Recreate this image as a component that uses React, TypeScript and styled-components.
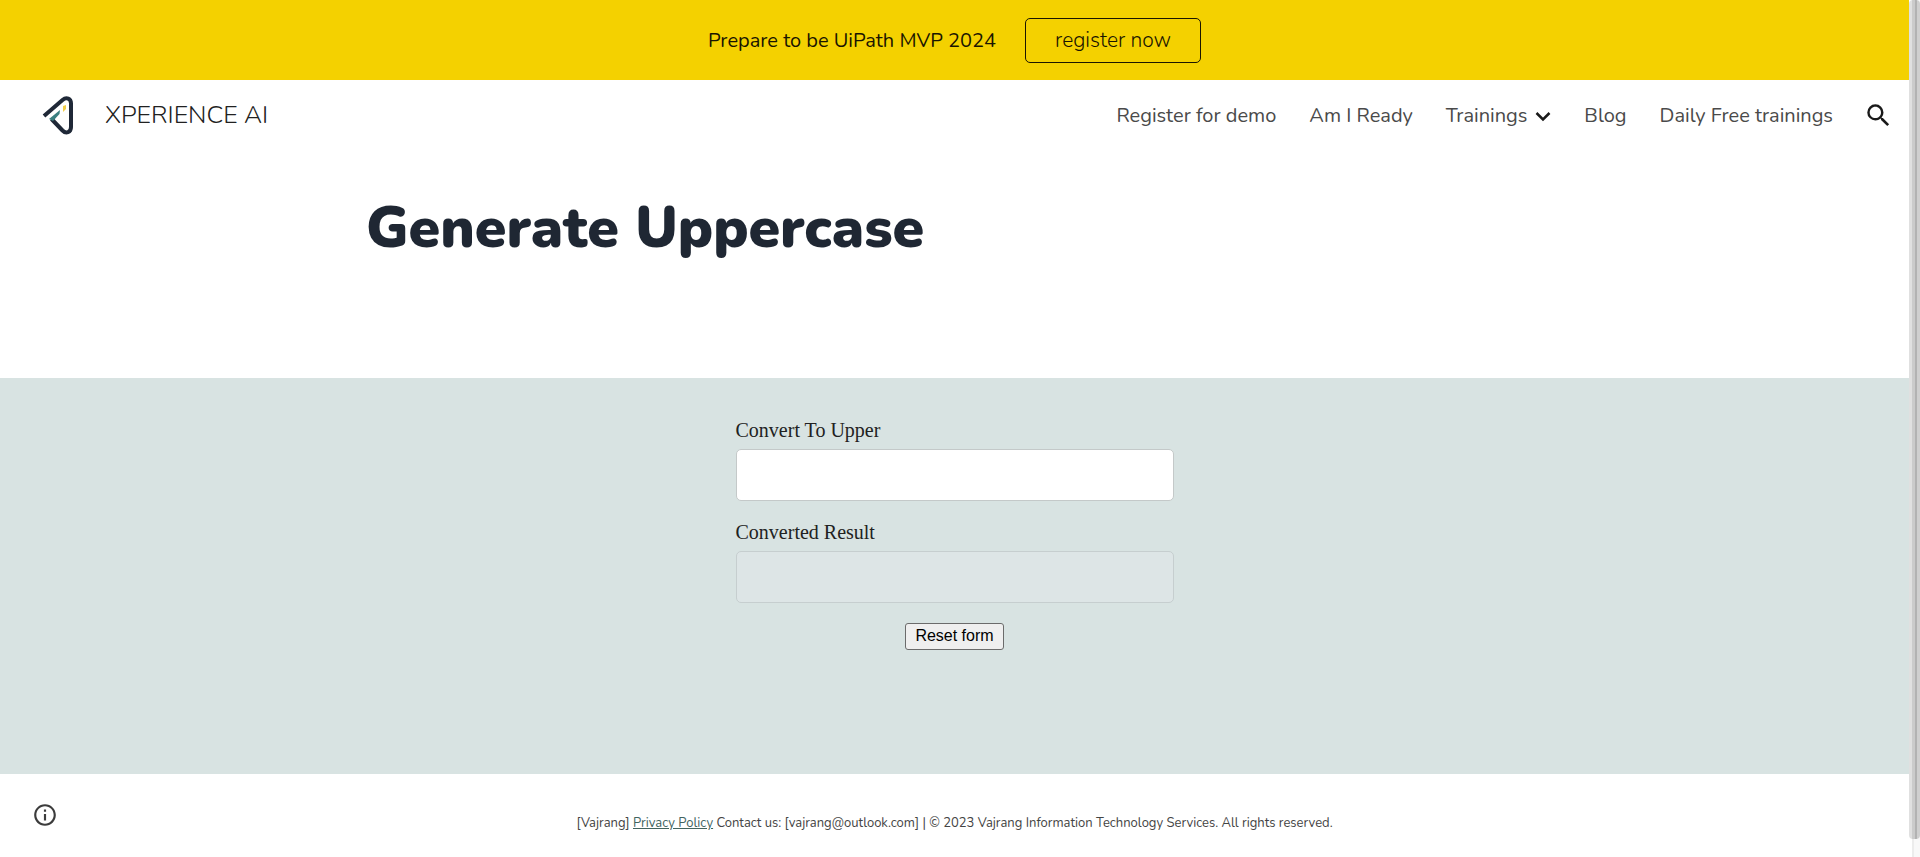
import React, { useState } from "react";
import styled, { createGlobalStyle } from "styled-components";

const GlobalStyle = createGlobalStyle`
  *, *::before, *::after { box-sizing: border-box; }
  body {
    margin: 0;
    background: #ffffff;
    color: #212121;
    font-family: Nunito, "Open Sans", "Noto Sans", sans-serif;
    font-weight: 300;
  }
  a { color: inherit; text-decoration: none; }
`;

const Shell = styled.div`
  display: grid;
  grid-template-columns: minmax(0, 1fr) 11px;
  min-height: 100vh;
`;

const Page = styled.div`
  display: flex;
  flex-direction: column;
`;

const ScrollTrack = styled.div`
  background: linear-gradient(to right, #ffffff 3px, #ececec 3px, #ececec 5px, #f8f8f8 5px);
  padding-bottom: 18px;
  display: flex;
`;

const ScrollThumb = styled.div`
  flex: 1;
  border-radius: 4px;
  background: linear-gradient(
    to right,
    #e0e0e0 3px,
    #cbcbcb 3px,
    #cbcbcb 6px,
    #b2b2b2 6px,
    #b2b2b2 8px,
    #cfcfcf 8px
  );
`;

const Banner = styled.section`
  display: flex;
  align-items: center;
  justify-content: center;
  gap: 29px;
  height: 80px;
  padding-top: 1px;
  background: #f4d100;
  color: #1a1500;
  font-size: 20px;
  font-weight: 400;
  line-height: 28px;
`;

const BannerText = styled.p`
  margin: 0;
`;

const BannerLink = styled.a`
  padding: 7px 29px 8px;
  border: 1px solid #1a1500;
  border-radius: 5px;
  font-size: 21px;
  font-weight: 300;
`;

const Header = styled.header`
  display: flex;
  align-items: center;
  justify-content: space-between;
  height: 70px;
  padding: 0 18px 0 40px;
`;

const Brand = styled.a`
  display: flex;
  align-items: center;
  gap: 29px;
  font-size: 25px;
  line-height: 32px;
`;

const Nav = styled.nav`
  display: flex;
  align-items: center;
  gap: 33px;
  padding-top: 1px;
  font-size: 20px;
  font-weight: 400;
  line-height: 28px;
  color: #4a4a4a;
`;

const NavLink = styled.a`
  display: flex;
  align-items: center;
  gap: 8px;
`;

const IconButton = styled.button`
  display: flex;
  padding: 0;
  border: 0;
  background: none;
  color: #1a1a1a;
`;

const Hero = styled.section`
  height: 228px;
  padding: 40px 366px 0;
`;

const Title = styled.h1`
  margin: 0;
  color: #1f2733;
  font-size: 57px;
  font-weight: 900;
  line-height: 76px;
  white-space: nowrap;
`;

const FormBand = styled.main`
  flex: 1;
  padding: 41px 24px;
  background: #d8e3e2;
`;

const Form = styled.form`
  display: flex;
  flex-direction: column;
  width: 100%;
  max-width: 438px;
  margin: 0 auto;
  font-family: "Liberation Serif", serif;
  font-weight: 400;
`;

const Field = styled.div`
  display: flex;
  flex-direction: column;
  gap: 8px;
  margin-bottom: 20px;
`;

const Label = styled.label`
  font-size: 20px;
  line-height: 22px;
`;

const Input = styled.input`
  width: 100%;
  height: 52px;
  padding: 12px 16px;
  border: 1px solid #c4c9c9;
  border-radius: 5px;
  background: #ffffff;
  font: 20px "Liberation Serif", serif;

  &:disabled {
    border-color: #c6cecf;
    background: #dde5e6;
  }
`;

const ResetButton = styled.button`
  align-self: center;
  height: 27px;
  padding: 0 9px 2px;
  border: 1px solid #6b6b6b;
  border-radius: 3px;
  background: #efefef;
  color: #000000;
  font: 16px/22px "Liberation Sans", sans-serif;
`;

const Footer = styled.footer`
  display: grid;
  grid-template-columns: 26px 1fr 26px;
  align-items: center;
  height: 83px;
  padding: 0 32px 2px;
  font-size: 13px;
  font-weight: 400;
  line-height: 20px;
  color: #444444;
`;

const FooterText = styled.p`
  margin: 16px 0 0;
  text-align: center;
`;

const PolicyLink = styled.a`
  color: #42645f;
  text-decoration: underline;
`;

const Logo = () => (
  <svg width="36" height="40" viewBox="0 0 36 40" fill="none" aria-hidden="true">
    <path
      d="M4 21 L22.500 5 C26.500 1.500 31 3.500 31 8.500 V32 C31 37.500 26 39 22.500 35.500 L11.500 24"
      stroke="#1f2837"
      strokeWidth="4"
      strokeLinejoin="round"
    />
    <path d="M9 24 L20 15 L19.500 19 L13 26 Z" fill="#397f80" />
    <path d="M23 11 L26 10 V14 L23 17 Z" fill="#f1cf4a" />
  </svg>
);

const Chevron = () => (
  <svg width="16" height="16" viewBox="0 0 16 16" fill="none" aria-hidden="true">
    <path d="M1.500 5 L8 11.500 L14.500 5" stroke="#1a1a1a" strokeWidth="2.500" />
  </svg>
);

const SearchIcon = () => (
  <svg width="25" height="25" viewBox="2 2 20 20" fill="currentColor" aria-hidden="true">
    <path d="M15.500 14h-.79l-.28-.27A6.471 6.471 0 0 0 16 9.500 6.500 6.500 0 1 0 9.500 16c1.610 0 3.090-.59 4.230-1.570l.27.280v.79l5 4.990L20.490 19l-4.990-5zm-6 0C7.010 14 5 11.990 5 9.500S7.010 5 9.500 5 14 7.010 14 9.500 11.990 14 9.500 14z" />
  </svg>
);

const InfoIcon = () => (
  <svg width="26" height="26" viewBox="0 0 24 24" fill="#3c3c3c" aria-hidden="true">
    <path d="M11 17h2v-6h-2v6zm1-15C6.480 2 2 6.480 2 12s4.480 10 10 10 10-4.480 10-10S17.520 2 12 2zm0 18c-4.410 0-8-3.590-8-8s3.590-8 8-8 8 3.590 8 8-3.590 8-8 8zM11 9h2V7h-2v2z" />
  </svg>
);

export default function App() {
  const [value, setValue] = useState("");

  return (
    <>
      <GlobalStyle />
      <Shell>
        <Page>
          <Banner>
            <BannerText>Prepare to be UiPath MVP 2024</BannerText>
            <BannerLink href="#register">register now</BannerLink>
          </Banner>
          <Header>
            <Brand href="#home">
              <Logo />
              XPERIENCE AI
            </Brand>
            <Nav>
              <NavLink href="#demo">Register for demo</NavLink>
              <NavLink href="#ready">Am I Ready</NavLink>
              <NavLink href="#trainings">
                Trainings
                <Chevron />
              </NavLink>
              <NavLink href="#blog">Blog</NavLink>
              <NavLink href="#daily">Daily Free trainings</NavLink>
              <IconButton type="button" aria-label="Search">
                <SearchIcon />
              </IconButton>
            </Nav>
          </Header>
          <Hero>
            <Title>Generate Uppercase</Title>
          </Hero>
          <FormBand>
            <Form onReset={() => setValue("")}>
              <Field>
                <Label htmlFor="source">Convert To Upper</Label>
                <Input id="source" value={value} onChange={(e) => setValue(e.target.value)} />
              </Field>
              <Field>
                <Label htmlFor="result">Converted Result</Label>
                <Input id="result" value={value.toUpperCase()} disabled />
              </Field>
              <ResetButton type="reset">Reset form</ResetButton>
            </Form>
          </FormBand>
          <Footer>
            <IconButton type="button" aria-label="Site information">
              <InfoIcon />
            </IconButton>
            <FooterText>
              [Vajrang] <PolicyLink href="#privacy">Privacy Policy</PolicyLink> Contact us:
              [vajrang@outlook.com] | © 2023 Vajrang Information Technology Services. All rights
              reserved.
            </FooterText>
          </Footer>
        </Page>
        <ScrollTrack>
          <ScrollThumb />
        </ScrollTrack>
      </Shell>
    </>
  );
}
